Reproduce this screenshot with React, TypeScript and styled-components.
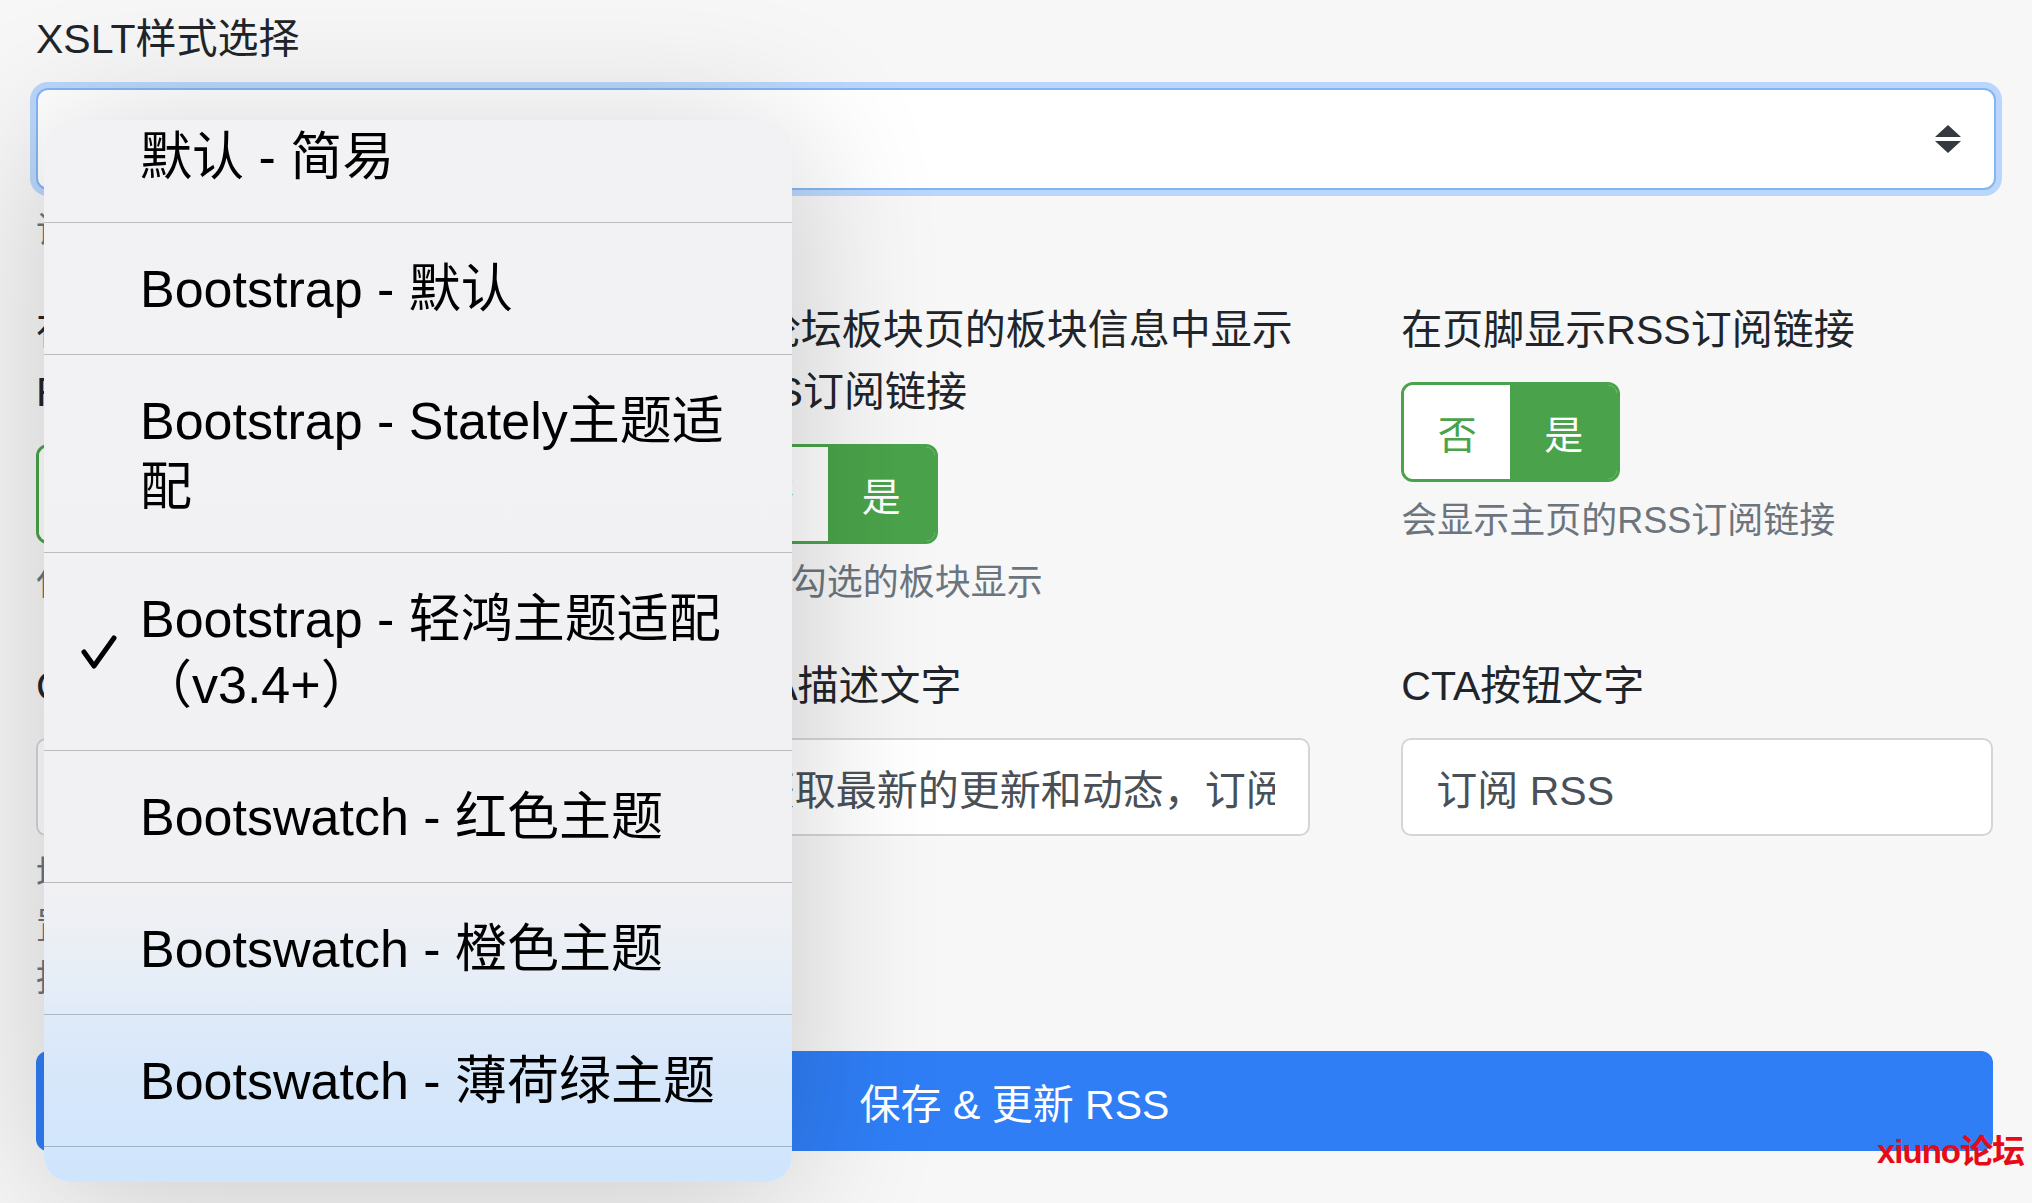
import React from "react";
import styled, { createGlobalStyle } from "styled-components";

const GlobalStyle = createGlobalStyle`
  html, body {
    margin: 0;
    padding: 0;
    background: #f7f7f8;
  }
  body {
    font-family: "Liberation Sans", "Noto Sans CJK SC", sans-serif;
    color: #212529;
  }
  * {
    box-sizing: border-box;
  }
`;

const Page = styled.div`
  position: relative;
  width: 2032px;
  height: 1203px;
  overflow: hidden;
  padding: 8px 39px 0 36px;
`;

const FieldLabel = styled.div<{ $gap?: number }>`
  font-size: 41px;
  line-height: 62px;
  color: #212529;
  margin-bottom: ${(p) => p.$gap ?? 21}px;
`;

const SelectBox = styled.div`
  height: 102px;
  margin-right: -3px;
  border: 2px solid #84b5f3;
  border-radius: 12px;
  background: #fff;
  box-shadow: 0 0 0 6px #bad7fb;
  display: flex;
  align-items: center;
  justify-content: space-between;
  padding: 0 32px 0 35px;
  font-size: 41px;
  color: #495057;
`;

const Help = styled.div<{ $gap?: number }>`
  font-size: 36px;
  line-height: 52px;
  color: #6c757d;
  margin-top: ${(p) => p.$gap ?? 13}px;
`;

const FieldGrid = styled.div`
  display: grid;
  grid-template-columns: repeat(3, 1fr);
  column-gap: 91px;
  row-gap: 46px;
  margin-top: 42px;
`;

const Field = styled.div`
  min-width: 0;
`;

const Toggle = styled.div`
  display: inline-flex;
  height: 100px;
  border: 3px solid #4aa34a;
  border-radius: 12px;
  overflow: hidden;
`;

const Segment = styled.div<{ $active?: boolean }>`
  width: ${(p) => (p.$active ? 107 : 106)}px;
  display: flex;
  align-items: center;
  justify-content: center;
  font-size: 39px;
  background: ${(p) => (p.$active ? "#4aa34a" : "#fff")};
  color: ${(p) => (p.$active ? "#fff" : "#4aa34a")};
`;

const TextInput = styled.input`
  display: block;
  width: 100%;
  height: 98px;
  border: 2px solid #d3d6d9;
  border-radius: 10px;
  background: #fff;
  padding: 0 33px;
  font-family: inherit;
  font-size: 41px;
  color: #495057;
  outline: none;
`;

const SaveButton = styled.button`
  display: block;
  width: 100%;
  height: 100px;
  margin-top: 46px;
  border: none;
  border-radius: 12px;
  background: #2f7ef6;
  color: #fff;
  font-family: inherit;
  font-size: 41px;
`;

// native picker overlay
const Menu = styled.div`
  position: absolute;
  left: 44px;
  top: 120px;
  width: 748px;
  height: 1062px;
  border-radius: 26px;
  overflow: hidden;
  background: linear-gradient(
    180deg,
    #f2f2f4 0%,
    #f1f1f3 72%,
    #e8eef6 80%,
    #d9e8fa 88%,
    #cfe5fd 100%
  );
  box-shadow: 0 14px 150px rgba(0, 0, 0, 0.19);
`;

const MenuList = styled.ul`
  list-style: none;
  margin: -29px 0 0;
  padding: 0;
`;

const MenuItem = styled.li`
  display: flex;
  align-items: center;
  padding: 32.5px 40px 32.5px 0;
  border-bottom: 1px solid rgba(60, 60, 80, 0.3);
  font-size: 52px;
  line-height: 66px;
  color: #000;
`;

const CheckCell = styled.div`
  width: 96px;
  flex-shrink: 0;
  display: flex;
  align-items: center;
  padding-left: 36px;
`;

const ItemText = styled.div`
  flex: 1;
  min-width: 0;
`;

const Watermark = styled.div`
  position: absolute;
  right: 8px;
  bottom: 30px;
  font-size: 33px;
  font-weight: 700;
  letter-spacing: -1px;
  color: #e60b16;
`;

const SelectArrows = () => (
  <svg width="28" height="30" viewBox="0 0 28 30">
    <path d="M14 1 L27 13 L1 13 Z" fill="#343a40" />
    <path d="M1 17 L27 17 L14 29 Z" fill="#343a40" />
  </svg>
);

const Check = () => (
  <svg width="38" height="36" viewBox="0 0 38 36">
    <path
      d="M4 18 L14 32 L34 4"
      fill="none"
      stroke="#000"
      strokeWidth="5"
      strokeLinecap="round"
      strokeLinejoin="round"
    />
  </svg>
);

const options = [
  "默认 - 简易",
  "Bootstrap - 默认",
  "Bootstrap - Stately主题适配",
  "Bootstrap - 轻鸿主题适配（v3.4+）",
  "Bootswatch - 红色主题",
  "Bootswatch - 橙色主题",
  "Bootswatch - 薄荷绿主题",
  "Bootswatch - 暗色主题",
];
const selected = 3;

function YesNo() {
  return (
    <Toggle>
      <Segment>否</Segment>
      <Segment $active>是</Segment>
    </Toggle>
  );
}

export default function App() {
  return (
    <>
      <GlobalStyle />
      <Page>
        <FieldLabel $gap={18}>XSLT样式选择</FieldLabel>
        <SelectBox>
          <span>{options[selected]}</span>
          <SelectArrows />
        </SelectBox>
        <Help $gap={15}>请选择RSS页面使用的XSLT样式</Help>

        <FieldGrid>
          <Field>
            <FieldLabel>在论坛首页的板块列表中显示RSS订阅链接</FieldLabel>
            <YesNo />
            <Help>仅在首页的板块列表显示</Help>
          </Field>
          <Field>
            <FieldLabel>在论坛板块页的板块信息中显示RSS订阅链接</FieldLabel>
            <YesNo />
            <Help>仅在勾选的板块显示</Help>
          </Field>
          <Field>
            <FieldLabel>在页脚显示RSS订阅链接</FieldLabel>
            <YesNo />
            <Help>会显示主页的RSS订阅链接</Help>
          </Field>

          <Field>
            <FieldLabel>CTA标题文字</FieldLabel>
            <TextInput readOnly value="订阅我们的RSS" />
            <Help>
              填写后将显示在订阅区域的标题位置，留空则使用默认的标题文字，支持简单的HTML标签
            </Help>
          </Field>
          <Field>
            <FieldLabel>CTA描述文字</FieldLabel>
            <TextInput readOnly value="获取最新的更新和动态，订阅我们的RSS" />
          </Field>
          <Field>
            <FieldLabel>CTA按钮文字</FieldLabel>
            <TextInput readOnly value="订阅 RSS" />
          </Field>
        </FieldGrid>

        <SaveButton>保存 &amp; 更新 RSS</SaveButton>

        <Menu>
          <MenuList>
            {options.map((opt, i) => (
              <MenuItem key={opt}>
                <CheckCell>{i === selected && <Check />}</CheckCell>
                <ItemText>{opt}</ItemText>
              </MenuItem>
            ))}
          </MenuList>
        </Menu>

        <Watermark>xiuno论坛</Watermark>
      </Page>
    </>
  );
}
